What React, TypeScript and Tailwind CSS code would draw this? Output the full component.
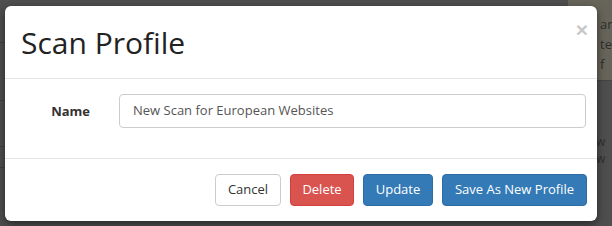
import React from "react";

export default function App() {
  return (
    <div className="relative w-[612px] h-[226px] overflow-hidden bg-[#4e4e4e]" style={{ fontFamily: '"Open Sans", sans-serif' }}>
      {/* backdrop page content */}
      <div className="absolute left-0 top-[42px] w-[20px] h-px bg-[#3f3f3f]" />
      <div className="absolute left-0 top-[100px] w-[20px] h-px bg-[#3f3f3f]" />
      <div className="absolute left-0 top-[146px] w-[20px] h-px bg-[#3f3f3f]" />
      <div className="absolute left-0 top-[167px] w-[20px] h-px bg-[#3f3f3f]" />
      <div className="absolute right-0 top-0 w-[44px] h-[80px] bg-[#67645a]" />
      <div className="absolute right-0 top-[80px] w-[44px] h-px bg-[#444]" />
      <div className="absolute left-[600px] top-[14px] text-[13px] leading-[20px] text-[#2e2e2e]">
        <div>ar</div>
        <div>te</div>
        <div>f</div>
      </div>
      <div className="absolute left-[596px] top-[133px] text-[12px] leading-[17px] text-[#2e2e2e]">
        <div>w</div>
        <div>w</div>
      </div>

      {/* modal */}
      <div className="absolute left-[5px] top-[6px] w-[592px] h-[215px] bg-white rounded-[6px] shadow-[0_3px_9px_rgba(0,0,0,0.5)] flex flex-col">
        <div className="relative h-[73px] shrink-0 border-b border-[#e5e5e5] flex items-center px-[16px]">
          <h4 className="text-[30px] leading-[36px] text-[#222] font-normal mt-[1px]">Scan Profile</h4>
          <span className="absolute right-[9px] top-[13px] text-[21px] font-bold leading-none text-[#c8c8c8]" style={{ fontFamily: '"Liberation Sans", Arial, sans-serif' }}>×</span>
        </div>
        <div className="h-[80px] shrink-0 border-b border-[#e5e5e5] flex items-start pt-[15px]">
          <label className="w-[114px] pr-[29px] pt-[8px] text-right text-[13px] leading-[18px] font-bold text-[#333]">Name</label>
          <div className="w-[467px] h-[34px] border border-[#ccc] rounded-[4px] flex items-center px-[13px] text-[13px] text-[#555]">
            New Scan for European Websites
          </div>
        </div>
        <div className="flex-1 flex items-start justify-end pt-[15px] pr-[10px]">
          <button className="h-[32px] w-[66px] mr-[9px] border border-[#ccc] rounded-[4px] bg-white text-[13px] text-[#333]">Cancel</button>
          <button className="h-[32px] w-[64px] mr-[9px] border border-[#d43f3a] rounded-[4px] bg-[#d9534f] text-[13px] text-white">Delete</button>
          <button className="h-[32px] w-[70px] mr-[9px] border border-[#2e6da4] rounded-[4px] bg-[#337ab7] text-[13px] text-white">Update</button>
          <button className="h-[32px] w-[145px] border border-[#2e6da4] rounded-[4px] bg-[#337ab7] text-[13px] text-white">Save As New Profile</button>
        </div>
      </div>
    </div>
  );
}
